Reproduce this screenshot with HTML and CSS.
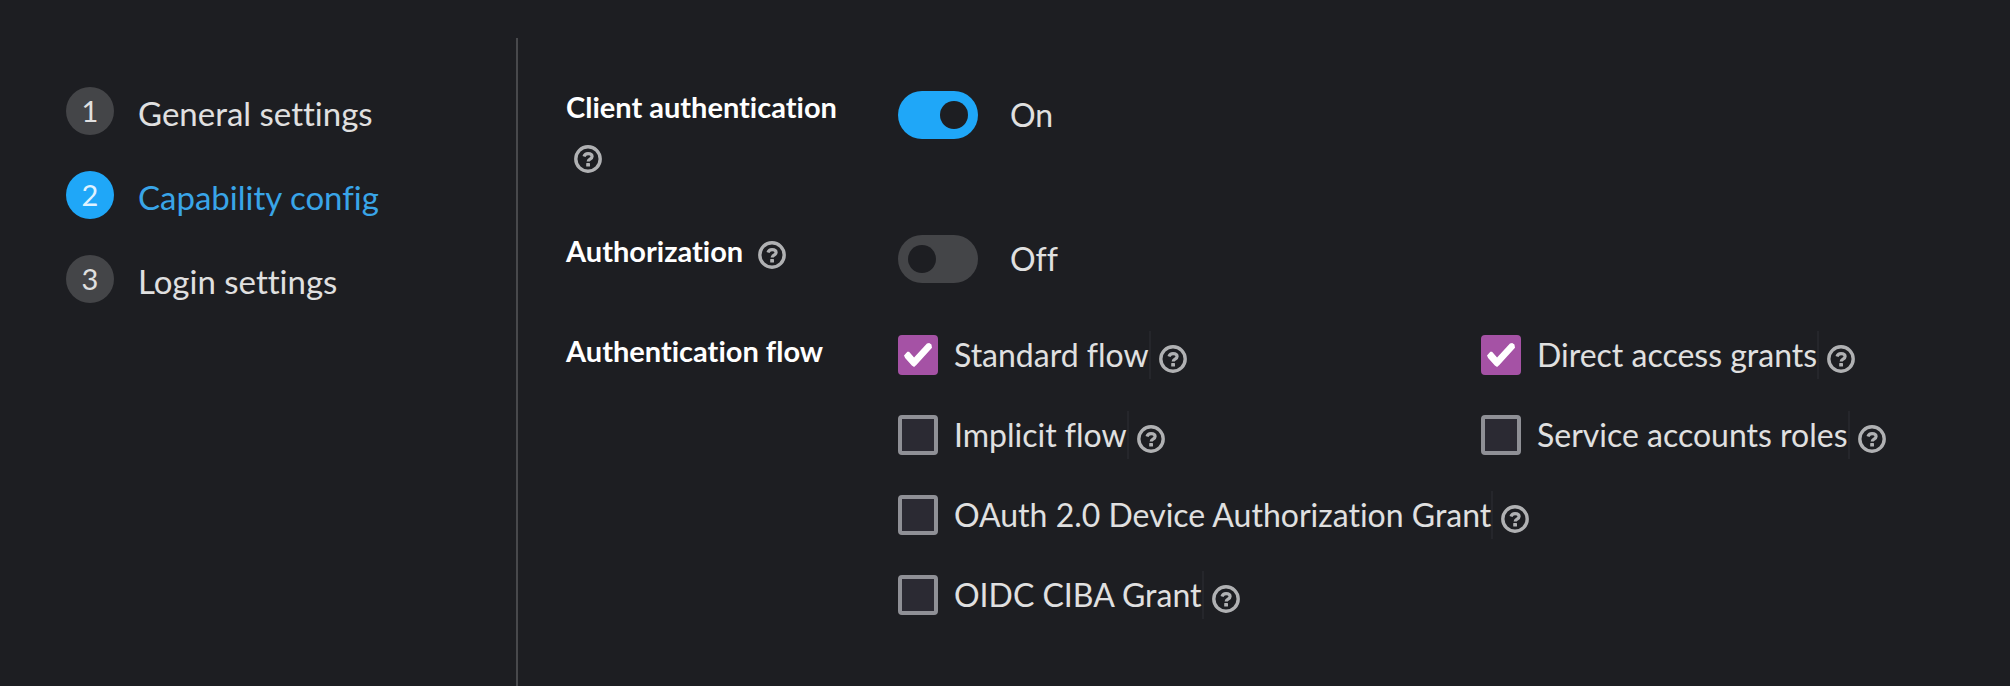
FILE: index.html
```html
<!DOCTYPE html>
<html lang="en">
<head>
<meta charset="utf-8">
<title>Create client</title>
<link rel="stylesheet" href="styles.css">
</head>
<body>
<svg class="sprite" aria-hidden="true">
  <symbol id="help" viewBox="0 0 28 28">
    <circle cx="14" cy="14" r="12.200" fill="none" stroke="currentColor" stroke-width="3.400"/>
    <path d="M10 11.400C10.600 9.600 12.100 8.700 14 8.700c2.400 0 4.100 1.100 4.100 2.900 0 2.600-3.900 2.500-3.900 4.900" fill="none" stroke="currentColor" stroke-width="3.200"/>
    <rect x="12.200" y="18" width="3.800" height="3.600" rx=".6" fill="currentColor"/>
  </symbol>
</svg>
<div class="wizard">
  <nav class="steps" aria-label="Steps">
    <ol class="step-list">
      <li><a class="step" href="#general"><span class="step-number">1</span><span class="step-name">General settings</span></a></li>
      <li><a class="step current" href="#capability" aria-current="step"><span class="step-number">2</span><span class="step-name">Capability config</span></a></li>
      <li><a class="step" href="#login"><span class="step-number">3</span><span class="step-name">Login settings</span></a></li>
    </ol>
  </nav>
  <main class="content">
    <form class="form">
      <div class="row">
        <div class="row-label"><label for="client-auth">Client authentication</label> <button type="button" class="help" aria-label="Help for client authentication"><svg><use href="#help"/></svg></button></div>
        <div class="toggle-field"><input type="checkbox" role="switch" class="toggle" id="client-auth" checked><label for="client-auth">On</label></div>
      </div>
      <div class="row">
        <div class="row-label"><label for="authorization">Authorization</label> <button type="button" class="help" aria-label="Help for authorization"><svg><use href="#help"/></svg></button></div>
        <div class="toggle-field"><input type="checkbox" role="switch" class="toggle" id="authorization"><label for="authorization">Off</label></div>
      </div>
      <div class="row" role="group" aria-labelledby="flow-label">
        <div class="row-label" id="flow-label">Authentication flow</div>
        <div class="flows">
          <div class="check"><input type="checkbox" id="standard" checked><label for="standard">Standard flow</label><button type="button" class="help" aria-label="Help for standard flow"><svg><use href="#help"/></svg></button></div>
          <div class="check"><input type="checkbox" id="direct" checked><label for="direct">Direct access grants</label><button type="button" class="help" aria-label="Help for direct access grants"><svg><use href="#help"/></svg></button></div>
          <div class="check"><input type="checkbox" id="implicit"><label for="implicit">Implicit flow</label><button type="button" class="help" aria-label="Help for implicit flow"><svg><use href="#help"/></svg></button></div>
          <div class="check"><input type="checkbox" id="service"><label for="service">Service accounts roles</label><button type="button" class="help" aria-label="Help for service accounts roles"><svg><use href="#help"/></svg></button></div>
          <div class="check wide"><input type="checkbox" id="device"><label for="device">OAuth 2.0 Device Authorization Grant</label><button type="button" class="help" aria-label="Help for device authorization grant"><svg><use href="#help"/></svg></button></div>
          <div class="check wide"><input type="checkbox" id="ciba"><label for="ciba">OIDC CIBA Grant</label><button type="button" class="help" aria-label="Help for OIDC CIBA grant"><svg><use href="#help"/></svg></button></div>
        </div>
      </div>
    </form>
  </main>
</div>
</body>
</html>
```
FILE: styles.css
```css
* { box-sizing: border-box; }

body {
  margin: 0;
  background: #1d1e22;
  color: #e0e0e0;
  font: 32px/48px Lato, "Open Sans", sans-serif;
  font-variant-ligatures: none;
}

.sprite { display: none; }

.wizard {
  display: flex;
  min-height: 100vh;
  padding-top: 38px;
}

.steps {
  flex: 0 0 518px;
  padding: 49px 48px 48px 66px;
  border-right: 2px solid #48494c;
}

.step-list {
  display: flex;
  flex-direction: column;
  gap: 36px;
  margin: 0;
  padding: 0;
  list-style: none;
}

.step {
  display: flex;
  gap: 24px;
  color: inherit;
  text-decoration: none;
}

.step-number {
  flex: none;
  width: 48px;
  height: 48px;
  border-radius: 50%;
  background: #444548;
  font-size: 29px;
  text-align: center;
}

.step-name {
  padding-top: 4px;
  font-size: 33px;
  line-height: 44px;
}

.current { color: #39a5e8; }
.current .step-number { background: #1fa7f8; color: #e0f2ff; }

.content {
  flex: 1;
  padding: 49px 26px 48px 48px;
}

.form {
  display: flex;
  flex-direction: column;
  gap: 48px;
}

.row {
  display: grid;
  grid-template-columns: 284px 1fr;
  gap: 48px;
}

.row-label {
  margin-top: -4px;
  padding-bottom: 4px;
  color: #fff;
  font-size: 29px;
  font-weight: 700;
}

.help {
  display: inline-flex;
  width: 28px;
  height: 28px;
  padding: 0;
  border: 0;
  background: none;
  color: #b0b1b3;
  vertical-align: -7px;
}

.help svg { width: 28px; height: 28px; }
.row-label .help { margin-left: 8px; }

.toggle-field {
  display: flex;
  align-items: flex-start;
  gap: 32px;
  padding-top: 4px;
}

.toggle {
  appearance: none;
  display: flex;
  width: 80px;
  height: 48px;
  margin: 0;
  padding: 10px;
  border-radius: 24px;
  background: #444548;
}

.toggle::before {
  content: "";
  width: 28px;
  height: 28px;
  border-radius: 50%;
  background: #1d1e22;
}

.toggle:checked {
  justify-content: flex-end;
  background: #1fa7f8;
}

.flows {
  display: grid;
  grid-template-columns: 1fr 1fr;
  gap: 32px 80px;
}

.check {
  display: flex;
  align-items: center;
}

.wide { grid-column: 1 / -1; }

.check input {
  appearance: none;
  display: grid;
  place-items: center;
  width: 40px;
  height: 40px;
  margin: 0 16px 0 0;
  border: 4px solid #8f9096;
  border-radius: 4px;
  background: #2b2a33;
}

.check input:checked {
  border-color: #a552a5;
  background: #a552a5;
}

.check input:checked::before {
  content: "";
  width: 28px;
  height: 24px;
  background: #fff;
  clip-path: polygon(0 52%, 12% 36%, 18% 36%, 36% 60%, 82% 2%, 90% 0, 98% 6%, 100% 20%, 44% 92%, 36% 100%, 28% 94%, 4% 62%);
}

.check label { border-right: 2px solid #25262b; }
.check .help { margin: 8px 0 0 8px; }
```
